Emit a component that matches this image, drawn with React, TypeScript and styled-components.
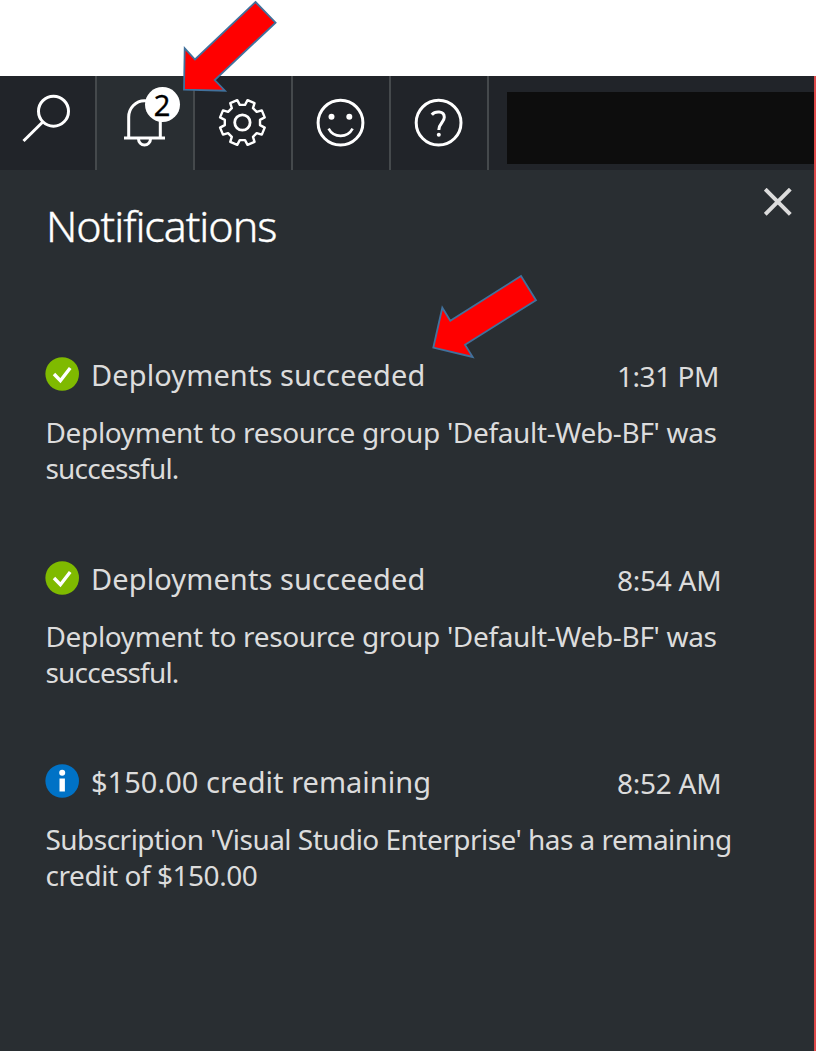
import React from "react";
import styled, { createGlobalStyle } from "styled-components";

const GlobalStyle = createGlobalStyle`
  * { box-sizing: border-box; }
  body {
    margin: 0;
    background: #fff;
    font-family: "Noto Sans", "Open Sans", sans-serif;
  }
`;

const Page = styled.div`
  position: relative;
  width: 816px;
  height: 1051px;
  padding-top: 76px;
  background: #fff;
  overflow: hidden;
`;

const Portal = styled.div`
  display: flex;
  flex-direction: column;
  height: 975px;
  border-right: 2px solid #e04a4b;
  background: #292e32;
`;

const TopBar = styled.header`
  display: flex;
  height: 94px;
  background: #212429;
`;

const BarButton = styled.button<{ $active?: boolean; $width?: number }>`
  position: relative;
  flex: none;
  width: ${(p) => p.$width ?? 98}px;
  height: 94px;
  padding: 0;
  border: 0;
  border-right: 2px solid #45494c;
  background: ${(p) => (p.$active ? "#292e32" : "transparent")};
  svg { display: block; }
`;

const Badge = styled.span`
  position: absolute;
  left: 48px;
  top: 11px;
  width: 35px;
  height: 35px;
  border-radius: 50%;
  background: #fff;
  color: #000;
  font: 29px/35px "Noto Sans", sans-serif;
  -webkit-text-stroke: 0.3px #000;
  text-align: center;
  text-indent: -1px;
`;

const Account = styled.div`
  width: 307px;
  height: 72px;
  margin: 16px 0 0 18px;
  background: #0d0d0d;
`;

const Panel = styled.main`
  flex: 1;
  padding: 0 22px 0 45px;
`;

const PanelHead = styled.div`
  display: flex;
  justify-content: space-between;
  height: 187px;
`;

const Title = styled.h1`
  margin: 26px 0 0 1px;
  color: #fff;
  font-size: 43px;
  font-weight: 300;
  line-height: 60px;
  letter-spacing: -1.05px;
  font-variant-ligatures: none;
  -webkit-text-stroke: 0.4px #fff;
`;

const Close = styled.button`
  width: 28px;
  height: 28px;
  margin-top: 18px;
  padding: 0;
  border: 0;
  background: none;
  svg { display: block; }
`;

const Item = styled.article`
  height: 203.5px;
  color: #dcdcdc;
`;

const ItemHead = styled.div`
  display: flex;
  height: 34px;
  svg { flex: none; }
`;

const ItemTitle = styled.h2<{ $spacing: number }>`
  width: 538px;
  margin: 0;
  padding-left: 12px;
  font-size: 29px;
  font-weight: 400;
  line-height: 36px;
  white-space: nowrap;
  letter-spacing: ${(p) => p.$spacing}px;
`;

const Time = styled.time<{ $spacing: number }>`
  font-size: 28px;
  font-weight: 400;
  line-height: 38px;
  white-space: nowrap;
  letter-spacing: ${(p) => p.$spacing}px;
`;

const Line = styled.p<{ $spacing: number }>`
  margin: 0;
  font-size: 28px;
  font-weight: 400;
  line-height: 36px;
  white-space: nowrap;
  letter-spacing: ${(p) => p.$spacing}px;
`;

const Body = styled.div`
  margin-top: 23px;
  padding-left: 0.5px;
`;

const Overlay = styled.svg`
  position: absolute;
  left: 0;
  top: 0;
  pointer-events: none;
`;

const gearPath = (() => {
  const points: string[] = [];
  const add = (deg: number, r: number) => {
    const a = (deg * Math.PI) / 180;
    points.push(`${(r * Math.sin(a)).toFixed(2)} ${(-r * Math.cos(a)).toFixed(2)}`);
  };
  for (let i = 0; i < 8; i++) {
    const c = 22.5 + i * 45;
    add(c - 14, 17.8);
    add(c - 9.5, 22.9);
    add(c + 9.5, 22.9);
    add(c + 14, 17.8);
  }
  return `M${points.join("L")}Z`;
})();

const stroke = { fill: "none", stroke: "#fff", strokeWidth: 3 };

const SearchIcon = () => (
  <svg width="95" height="94" {...stroke}>
    <circle cx="53.5" cy="35.2" r="15" />
    <path d="M43 45.7 23.5 65" />
  </svg>
);

const BellIcon = () => (
  <svg width="96" height="94" {...stroke}>
    <path d="M31.7 62V41a15.8 16.3 0 0 1 31.6 0v21M27 62h41M41.5 63a6 6 0 0 0 12 0" />
  </svg>
);

const GearIcon = () => (
  <svg width="96" height="94" {...stroke} strokeWidth={2.4} strokeLinejoin="round">
    <g transform="translate(47.4 46.5)">
      <path d={gearPath} />
      <circle r="7.7" strokeWidth="2.8" />
    </g>
  </svg>
);

const SmileIcon = () => (
  <svg width="96" height="94" {...stroke}>
    <circle cx="47.5" cy="46.7" r="22.4" />
    <circle cx="38.5" cy="40.7" r="3" fill="#fff" stroke="none" />
    <circle cx="56.3" cy="40.7" r="3" fill="#fff" stroke="none" />
    <path d="M35.6 52.7a13.6 13.6 0 0 0 24 0" strokeWidth="2.6" />
  </svg>
);

const HelpIcon = () => (
  <svg width="96" height="94" {...stroke}>
    <circle cx="47.6" cy="46.7" r="22.4" />
    <path d="M40.8 38.8C44 35 53.3 34.6 53.3 41.2C53.3 46.5 47.8 47.2 47.8 54" strokeWidth="3" />
    <circle cx="47.8" cy="58.8" r="2" fill="#fff" stroke="none" />
  </svg>
);

const SuccessIcon = () => (
  <svg width="34" height="34">
    <circle cx="17.2" cy="17" r="16.8" fill="#7fba00" />
    <path d="m9 17 6.4 6.7L25.2 11" fill="none" stroke="#fff" strokeWidth="3.4" />
  </svg>
);

const InfoIcon = () => (
  <svg width="34" height="34">
    <circle cx="17.2" cy="17" r="16.8" fill="#0072c6" />
    <circle cx="17.2" cy="8.8" r="3" fill="#fff" />
    <path d="M14.5 14.5h5.4v13h-5.4z" fill="#fff" />
  </svg>
);

type Notice = {
  kind: "success" | "info";
  title: string;
  titleSpacing: number;
  time: string;
  timeSpacing: number;
  lines: { text: string; spacing: number }[];
};

const deployed = [
  { text: "Deployment to resource group 'Default-Web-BF' was", spacing: -0.34 },
  { text: "successful.", spacing: -0.8 },
];

const notices: Notice[] = [
  { kind: "success", title: "Deployments succeeded", titleSpacing: 0.1, time: "1:31 PM", timeSpacing: -0.45, lines: deployed },
  { kind: "success", title: "Deployments succeeded", titleSpacing: 0.1, time: "8:54 AM", timeSpacing: -0.25, lines: deployed },
  {
    kind: "info",
    title: "$150.00 credit remaining",
    titleSpacing: 0.02,
    time: "8:52 AM",
    timeSpacing: -0.25,
    lines: [
      { text: "Subscription 'Visual Studio Enterprise' has a remaining", spacing: -0.53 },
      { text: "credit of $150.00", spacing: -0.45 },
    ],
  },
];

export default function App() {
  return (
    <Page>
      <GlobalStyle />
      <Portal>
        <TopBar>
          <BarButton $width={97} aria-label="Search"><SearchIcon /></BarButton>
          <BarButton $active aria-label="Notifications">
            <BellIcon />
            <Badge>2</Badge>
          </BarButton>
          <BarButton aria-label="Settings"><GearIcon /></BarButton>
          <BarButton aria-label="Feedback"><SmileIcon /></BarButton>
          <BarButton aria-label="Help"><HelpIcon /></BarButton>
          <Account />
        </TopBar>
        <Panel>
          <PanelHead>
            <Title>Notifications</Title>
            <Close aria-label="Close">
              <svg width="28" height="28" fill="none" stroke="#dcdcdc" strokeWidth="4">
                <path d="M1.2 1.2 26.3 26.3M26.3 1.2 1.2 26.3" />
              </svg>
            </Close>
          </PanelHead>
          {notices.map((n, i) => (
            <Item key={i}>
              <ItemHead>
                {n.kind === "success" ? <SuccessIcon /> : <InfoIcon />}
                <ItemTitle $spacing={n.titleSpacing}>{n.title}</ItemTitle>
                <Time $spacing={n.timeSpacing}>{n.time}</Time>
              </ItemHead>
              <Body>
                {n.lines.map((l) => (
                  <Line key={l.text} $spacing={l.spacing}>{l.text}</Line>
                ))}
              </Body>
            </Item>
          ))}
        </Panel>
      </Portal>
      <Overlay width="816" height="400" fill="#f00" stroke="#41719c" strokeWidth="1.8">
        <path d="M255.5 2 275.6 22.6 214.7 80 225 90.7 184 89.7 184.7 48.3 195 59.5Z" />
        <path d="M521 276 536 300.3 465 344.7 472.7 357 433.3 347.7 442.3 307.7 450.3 320.7Z" />
      </Overlay>
    </Page>
  );
}
